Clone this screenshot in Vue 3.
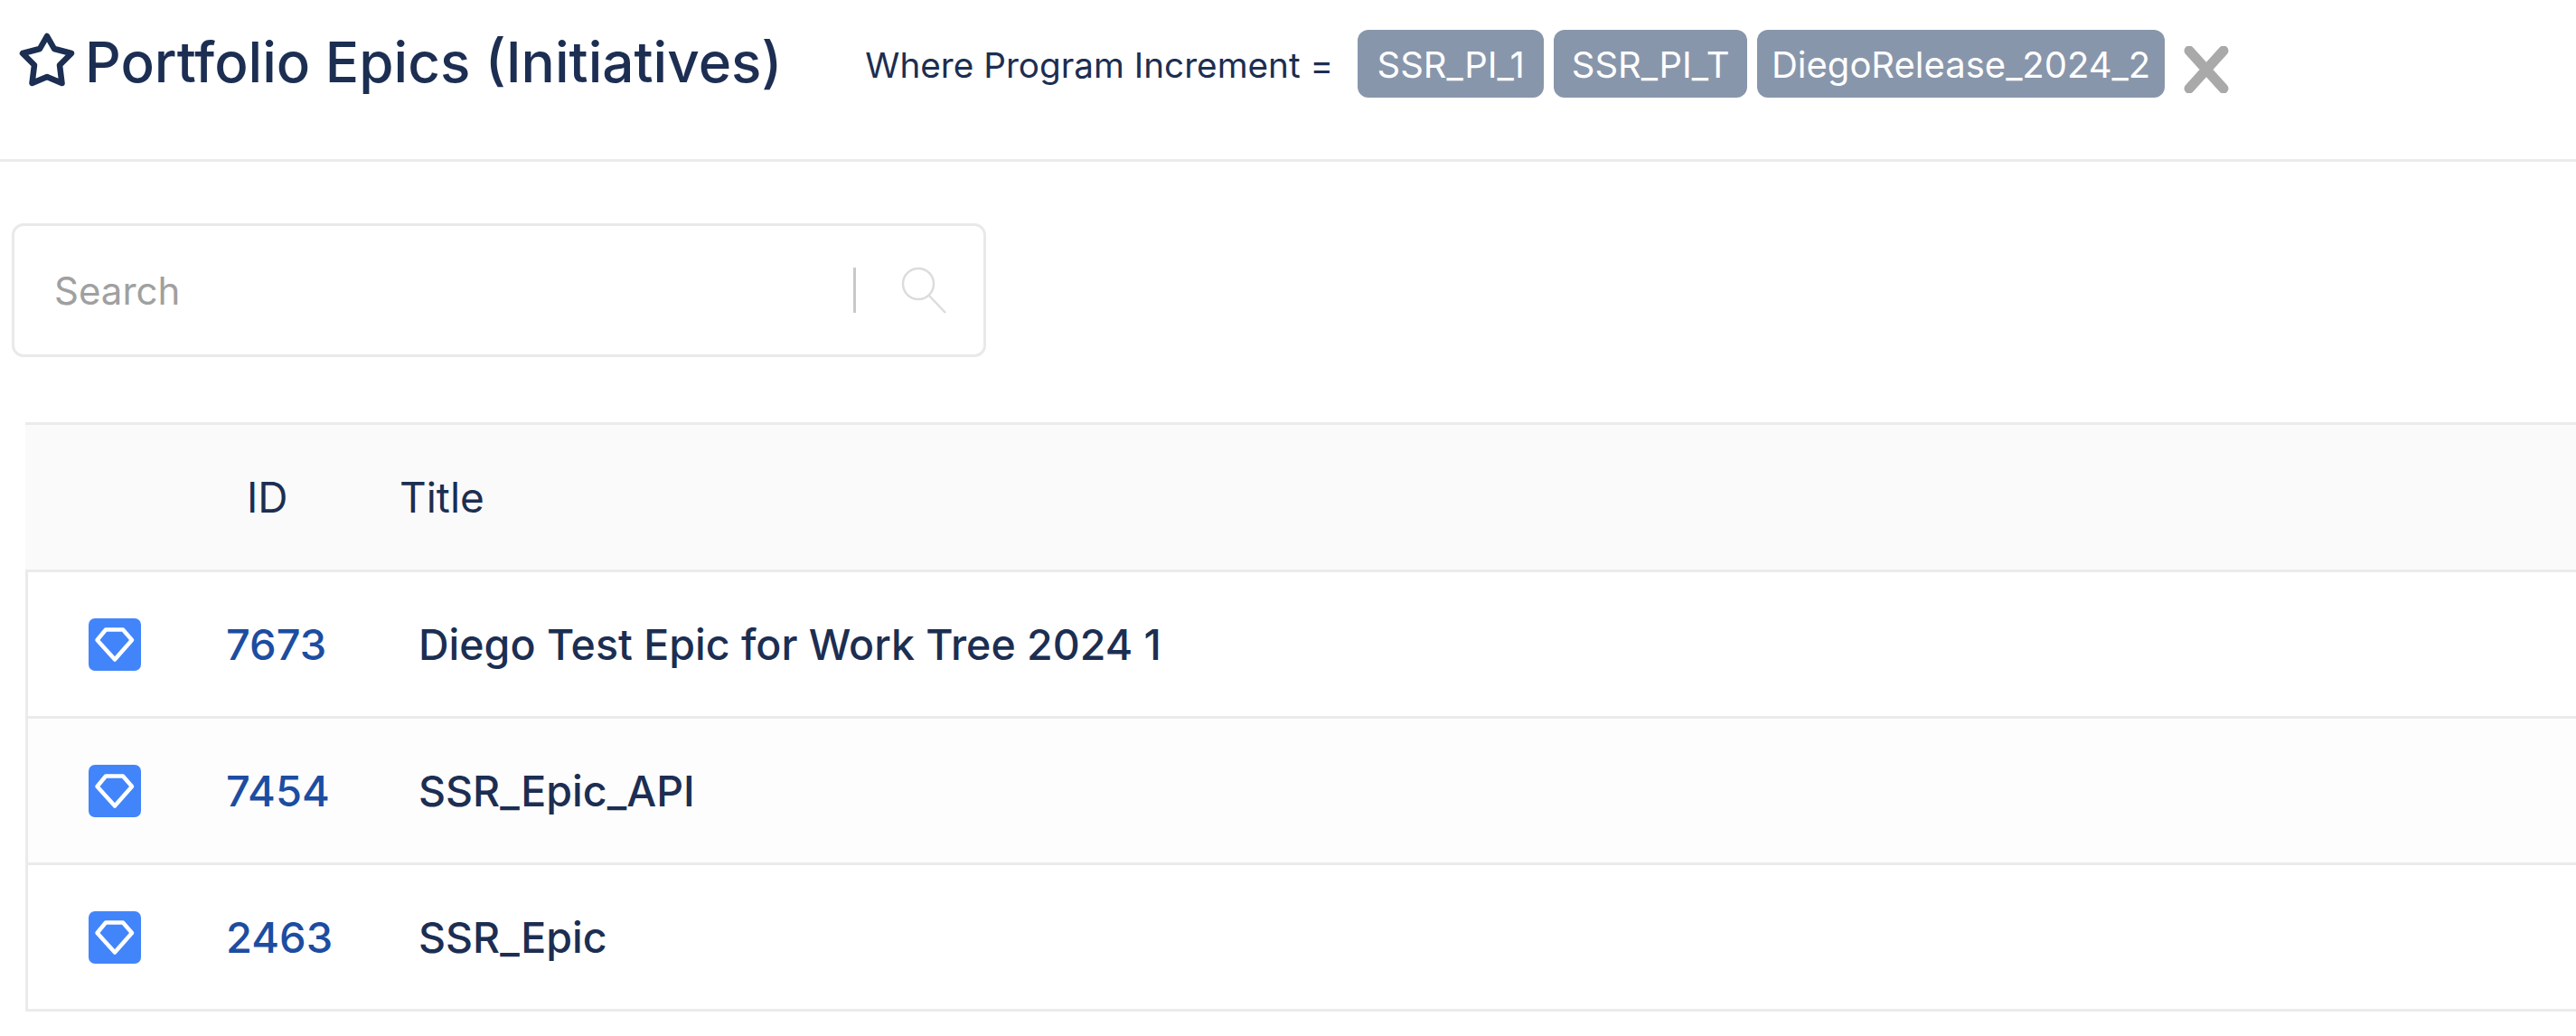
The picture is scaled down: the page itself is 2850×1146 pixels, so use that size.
<template>
  <main class="page">
    <header class="topbar">
      <svg class="star" viewBox="20 36 62 62" width="62" height="62">
        <path d="M51 40 L59 54 L78 59 L65 72 L67.500 92 L51 85 L34.500 92 L37 72 L24 59 L43 54 Z" fill="none" stroke="#1c2e52" stroke-width="6.500" stroke-linejoin="round"/>
      </svg>
      <h1 class="title">Portfolio Epics (Initiatives)</h1>
      <span class="where">Where Program Increment =</span>
      <div class="chips">
        <span v-for="chip in chips" :key="chip" class="chip">{{ chip }}</span>
      </div>
      <svg class="clear" viewBox="0 0 52 52" width="52" height="52">
        <path d="M7 5 L45 47 M45 5 L7 47" stroke="#a9a9a9" stroke-width="11" stroke-linecap="round" fill="none"/>
      </svg>
    </header>

    <div class="search">
      <span class="placeholder">Search</span>
      <span class="sep"></span>
      <svg class="glass" viewBox="0 0 50 52" width="50" height="52">
        <circle cx="19" cy="19" r="17" fill="none" stroke="#dcdcdc" stroke-width="2.500"/>
        <path d="M31 32 L49 51" stroke="#dcdcdc" stroke-width="2.500" fill="none"/>
      </svg>
    </div>

    <section class="table">
      <div class="head">
        <span class="head-id">ID</span>
        <span class="head-title">Title</span>
      </div>
      <div v-for="row in rows" :key="row.id" class="row">
        <span class="type">
          <svg viewBox="0 0 58 58" width="58" height="58">
            <path d="M19 12.500 H38 L48 24 L29 45.500 L9.500 24 Z" fill="none" stroke="#fff" stroke-width="4.500" stroke-linejoin="round"/>
          </svg>
        </span>
        <span class="id">{{ row.id }}</span>
        <span class="name">{{ row.name }}</span>
      </div>
    </section>
  </main>
</template>

<script setup>
const chips = ['SSR_PI_1', 'SSR_PI_T', 'DiegoRelease_2024_2']

const rows = [
  { id: 7673, name: 'Diego Test Epic for Work Tree 2024 1' },
  { id: 7454, name: 'SSR_Epic_API' },
  { id: 2463, name: 'SSR_Epic' },
]
</script>

<style>
body {
  background: #fff;
}
</style>

<style scoped>
.page {
  width: 2850px;
  height: 1146px;
  overflow: hidden;
  font-family: Inter, "Liberation Sans", sans-serif;
  color: #1c2e52;
  background: #fff;
}

.topbar {
  display: flex;
  align-items: center;
  height: 140px;
  padding: 0 0 36px 21px;
  border-bottom: 3px solid #ebebeb;
}

.star {
  flex: none;
  margin-top: -6px;
}

.title {
  margin: -3px 0 0 11px;
  font-size: 62px;
  font-weight: 500;
  white-space: nowrap;
}

.where {
  margin: 3px 0 0 92px;
  font-size: 38.700px;
  white-space: nowrap;
}

.chips {
  display: grid;
  grid-template-columns: 206px 214px 451px;
  gap: 11px;
  margin-left: 27px;
}

.chip {
  display: flex;
  align-items: center;
  justify-content: center;
  height: 75px;
  padding-top: 3px;
  box-sizing: border-box;
  border-radius: 12px;
  background: #8896ab;
  color: #fff;
  font-size: 40px;
  white-space: nowrap;
}

.clear {
  flex: none;
  margin: 13px 0 0 20px;
}

.search {
  display: flex;
  align-items: center;
  width: 1078px;
  height: 148px;
  margin: 68px 0 0 13px;
  padding: 0 41px 0 44px;
  box-sizing: border-box;
  border: 3px solid #e9e9e9;
  border-radius: 13px;
}

.placeholder {
  flex: 1;
  font-size: 42px;
  color: #a0a0a0;
}

.sep {
  width: 3px;
  height: 50px;
  background: #c9c9c9;
}

.glass {
  margin-left: 50px;
}

.table {
  margin: 72px 0 0 28px;
}

.head {
  display: flex;
  align-items: center;
  height: 160px;
  border-top: 3px solid #ebebeb;
  border-bottom: 3px solid #ebebeb;
  background: #fafafa;
  font-size: 46px;
}

.head-id {
  margin-left: 245px;
  width: 169px;
}

.row {
  display: flex;
  align-items: center;
  height: 159px;
  border-left: 3px solid #ebebeb;
  border-bottom: 3px solid #ebebeb;
}

.row:nth-child(odd) {
  background: #fdfdfd;
}

.type {
  display: flex;
  width: 58px;
  height: 58px;
  margin-left: 67px;
  border-radius: 7px;
  background: #4285fb;
}

.id {
  margin-left: 94px;
  width: 213px;
  font-size: 47px;
  font-weight: 500;
  color: #1c4da1;
}

.name {
  font-size: 46.500px;
  font-weight: 550;
}
</style>
